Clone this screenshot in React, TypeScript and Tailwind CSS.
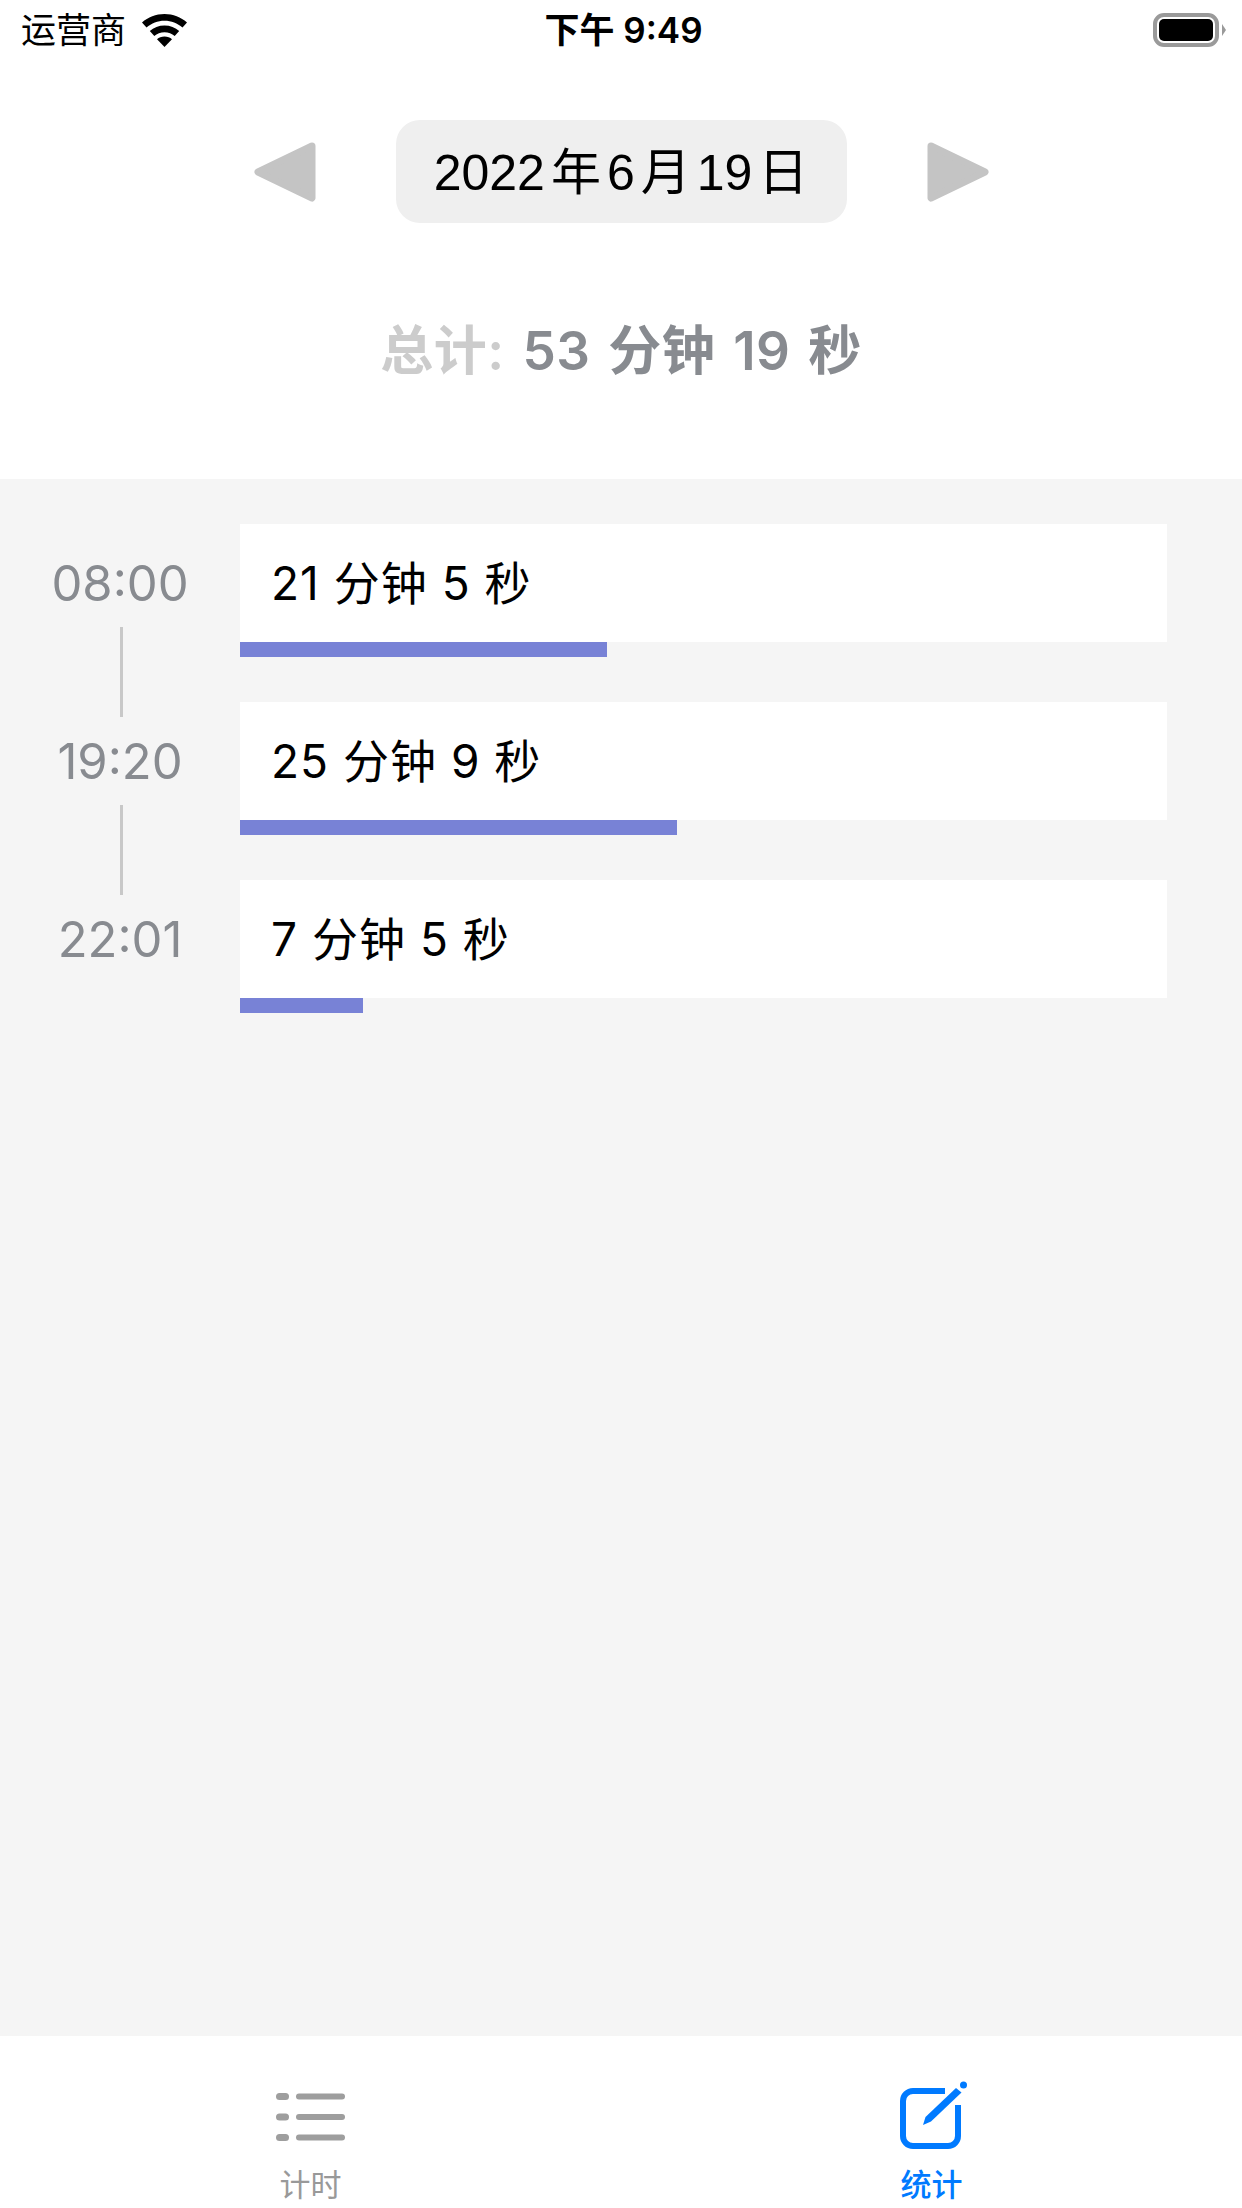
const SANS = "font-['Liberation_Sans','Noto_Sans_CJK_SC',sans-serif]";
const INTER = "font-['Inter','Noto_Sans_CJK_SC',sans-serif]";

const SESSIONS = [
  { time: '08:00', label: '21 分钟 5 秒', bar: 'w-[367px]' },
  { time: '19:20', label: '25 分钟 9 秒', bar: 'w-[437px]' },
  { time: '22:01', label: '7 分钟 5 秒', bar: 'w-[123px]' },
];

function StatusBar() {
  return (
    <div className="flex h-[60px] items-center pl-[21px] pr-[16px] text-black">
      <div className="flex flex-1 items-center gap-[16px]">
        <span className="text-[35px] leading-none">运营商</span>
        <svg width="45" height="33" viewBox="0 0 45 33" fill="#000">
          <path d="M22.500 0C14 0 6 3.200 0 8.500l4.500 5C9.500 9.300 15.700 6.800 22.500 6.800S35.500 9.300 40.500 13.500l4.500-5C39 3.200 31 0 22.500 0z" />
          <path d="M22.500 11.500c-5.700 0-10.800 2-14.700 5.500l4.500 5c2.700-2.300 6.300-3.700 10.200-3.700s7.500 1.400 10.200 3.700l4.500-5c-3.900-3.500-9-5.500-14.700-5.500z" />
          <path d="M22.500 22.500c-3 0-5.600 1-7.500 2.800L22.500 33l7.500-7.700c-1.900-1.800-4.500-2.800-7.500-2.800z" />
        </svg>
      </div>
      <span className={`${INTER} text-[35px] font-semibold leading-none`}>下午 9:49</span>
      <div className="flex flex-1 justify-end">
        <svg width="73" height="34" viewBox="0 0 73 34">
          <rect x="2" y="2" width="62" height="30" rx="9" fill="none" stroke="#9a9a9a" strokeWidth="4" />
          <rect x="6" y="6" width="54" height="22" rx="5" fill="#000" />
          <path d="M69 11l4 6-4 6z" fill="#9a9a9a" />
        </svg>
      </div>
    </div>
  );
}

function Arrow({ flip }: { flip?: boolean }) {
  return (
    <svg width="62" height="60" viewBox="0 0 62 60" className={flip ? '-scale-x-100' : ''}>
      <path d="M58 4 L4 30 L58 56 Z" fill="#c4c4c4" stroke="#c4c4c4" strokeWidth="7" strokeLinejoin="round" />
    </svg>
  );
}

export default function App() {
  return (
    <div className={`flex h-[2208px] w-[1242px] flex-col bg-white ${SANS}`}>
      <StatusBar />
      <div className="flex h-[419px] flex-col items-center pt-[60px]">
        <div className="flex items-center gap-[80px]">
          <Arrow />
          <div className="flex h-[103px] w-[451px] items-center justify-center rounded-[24px] bg-[#efefef] pt-[3px] text-[50px] text-black">
            2022<span className="mx-[6px]">年</span>6<span className="mx-[6px]">月</span>19<span className="ml-[6px]">日</span>
          </div>
          <Arrow flip />
        </div>
        <div className={`${INTER} mt-[102px] text-[53px] font-semibold leading-none tracking-[0.5px] text-[#888b90] [word-spacing:4px]`}>
          <span className="text-[#cccccc]">总计:</span> 53 分钟 19 秒
        </div>
      </div>
      <div className="flex flex-1 flex-col gap-[45px] bg-[#f5f5f5] pt-[45px]">
        {SESSIONS.map((s, i) => (
          <div key={s.time} className="relative flex">
            <div className={`${INTER} w-[240px] pt-[35px] text-center text-[49px] font-normal leading-none text-[#888b90]`}>{s.time}</div>
            <div className="w-[927px]">
              <div className={`${INTER} flex h-[118px] items-center bg-white pl-[31px] text-[46px] tracking-[1px] text-black`}>{s.label}</div>
              <div className={`h-[15px] bg-[#7882d6] ${s.bar}`} />
            </div>
            {i < SESSIONS.length - 1 && <div className="absolute left-[120px] top-[103px] h-[90px] w-[3px] bg-[#c8c8c8]" />}
          </div>
        ))}
      </div>
      <div className="flex h-[172px] bg-white">
        <div className="flex w-[621px] flex-col items-center pt-[57px]">
          <svg width="69" height="48" viewBox="0 0 69 48" fill="#9e9e9e">
            <rect x="0" y="0" width="13" height="7" rx="3.500" />
            <rect x="20" y="0.500" width="49" height="6" rx="3" />
            <rect x="0" y="20.500" width="13" height="7" rx="3.500" />
            <rect x="20" y="21" width="49" height="6" rx="3" />
            <rect x="0" y="41" width="13" height="7" rx="3.500" />
            <rect x="20" y="41.500" width="49" height="6" rx="3" />
          </svg>
          <span className="mt-[29px] text-[31px] leading-none text-[#999999]">计时</span>
        </div>
        <div className="flex w-[621px] flex-col items-center pt-[45px]">
          <svg width="70" height="70" viewBox="0 0 70 70" fill="none" className="ml-[7px]">
            <path d="M45 10H13a10 10 0 0 0-10 10v35a10 10 0 0 0 10 10h35a10 10 0 0 0 10-10V24" stroke="#007aff" strokeWidth="6" />
            <path d="M23 44l2.500-8L56 7l5.500 4.500L31 40.500z" fill="#007aff" />
            <circle cx="63.500" cy="4" r="3.500" fill="#007aff" />
          </svg>
          <span className="mt-[19px] text-[31px] font-medium leading-none text-[#007aff]">统计</span>
        </div>
      </div>
    </div>
  );
}
